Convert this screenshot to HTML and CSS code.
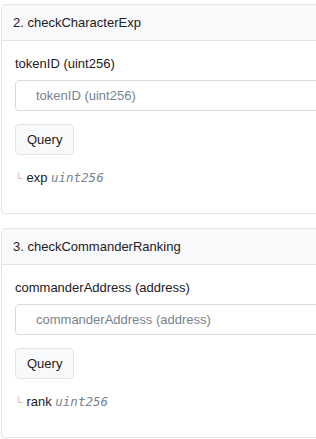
FILE: index.html
```html
<!DOCTYPE html>
<html lang="en">
<head>
  <meta charset="UTF-8">
  <title>Read Contract</title>
  <link rel="stylesheet" href="styles.css">
</head>
<body>

  <div class="accordion">
    <div class="card">
      <div class="card-header">2. checkCharacterExp</div>
      <div class="card-body">
        <label class="field-label">tokenID (uint256)</label>
        <input class="field-input" type="text" placeholder="tokenID (uint256)">
        <button class="btn-query">Query</button>
        <div class="result"><span class="corner">└</span> exp <i class="type">uint256</i></div>
      </div>
    </div>

    <div class="card">
      <div class="card-header">3. checkCommanderRanking</div>
      <div class="card-body">
        <label class="field-label">commanderAddress (address)</label>
        <input class="field-input" type="text" placeholder="commanderAddress (address)">
        <button class="btn-query">Query</button>
        <div class="result"><span class="corner">└</span> rank <i class="type">uint256</i></div>
      </div>
    </div>
  </div>

</body>
</html>
```

FILE: styles.css
```css
body {
  font-family: "Liberation Sans", Arial, sans-serif;
  font-size: 13px;
  color: #1e2022;
  background: #ffffff;
  margin: 0;
  padding: 4px 0 0 1px;
  overflow: hidden;
}

.accordion {
  width: 340px;
}

.card {
  border: 1px solid #e1e4ea;
  border-radius: 4px;
  margin-bottom: 14px;
  background: #fff;
}

.card-header {
  background-color: #f8f9fa;
  border-bottom: 1px solid #e1e4ea;
  padding: 8px 11px;
  line-height: 19px;
  border-radius: 4px 4px 0 0;
}

.card-body {
  padding: 13px 13px 25px;
}

.field-label {
  display: block;
  line-height: 19px;
  margin-bottom: 7px;
}

.field-input {
  display: block;
  box-sizing: border-box;
  width: 100%;
  height: 31px;
  border: 1px solid #d5dae2;
  border-radius: 4px;
  padding: 0 20px;
  font-family: inherit;
  font-size: 13px;
  color: #1e2022;
  margin-bottom: 13px;
}

.field-input::placeholder {
  color: #77838f;
}

.btn-query {
  display: block;
  height: 31px;
  padding: 0 11px;
  background-color: #f8f9fa;
  border: 1px solid #e1e4ea;
  border-radius: 4px;
  font-family: inherit;
  font-size: 13px;
  color: #1e2022;
  margin-bottom: 13px;
}

.result {
  line-height: 19px;
}

.corner {
  color: #b4bcc6;
  font-size: 11px;
}

.type {
  font-family: "DejaVu Sans Mono", monospace;
  font-size: 12.5px;
  color: #77838f;
}
```
